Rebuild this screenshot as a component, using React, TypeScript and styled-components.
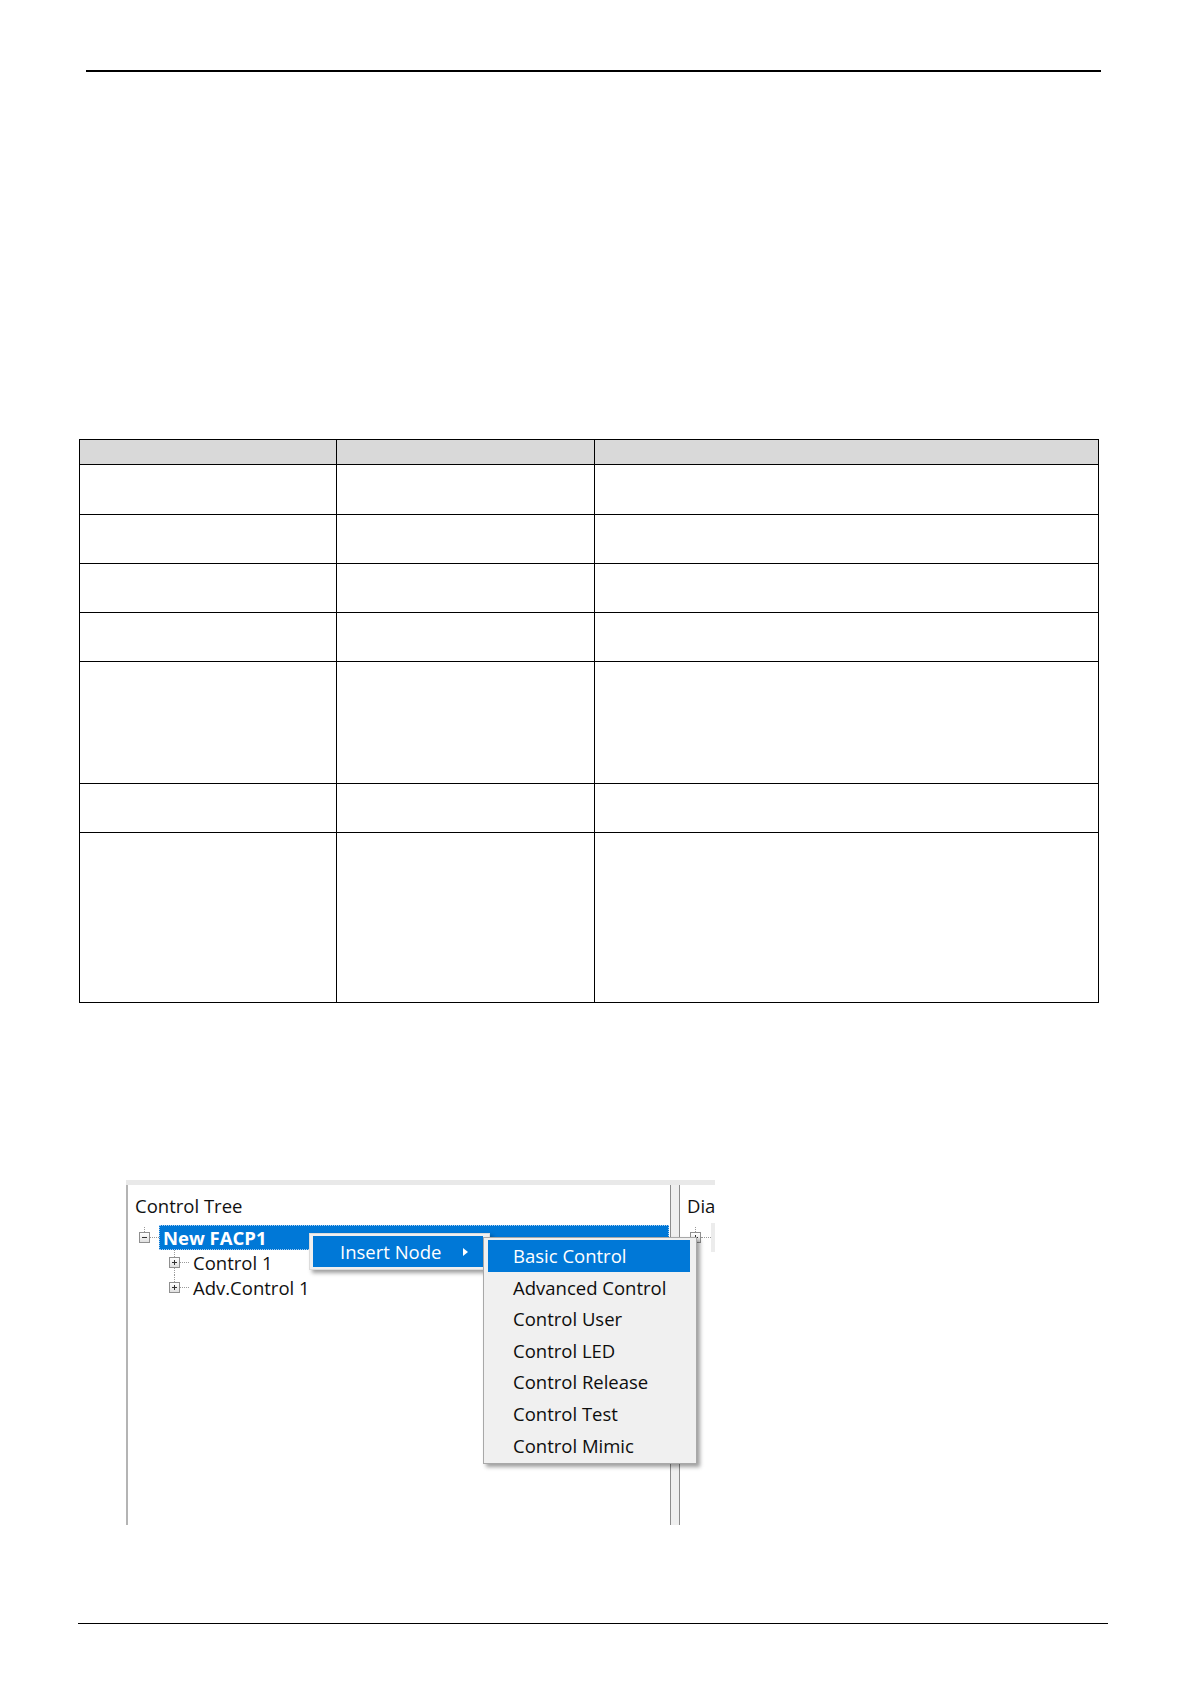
import * as React from 'react';
import styled, { createGlobalStyle } from 'styled-components';

const GlobalStyle = createGlobalStyle`
  html, body {
    margin: 0;
    padding: 0;
    background: #fff;
  }
  body {
    font-family: "Open Sans", "Liberation Sans", sans-serif;
    color: #000;
  }
`;

const Page = styled.div`
  width: 1190px;
  min-height: 1684px;
  display: flex;
  flex-direction: column;
  align-items: flex-start;
`;

const TopRule = styled.div`
  margin: 70px 0 0 86px;
  width: 1015px;
  height: 2px;
  background: #000;
`;

const BottomRule = styled.div`
  margin: 98px 0 0 78px;
  width: 1030px;
  height: 1px;
  background: #000;
`;

// empty spec table
const Table = styled.div`
  margin: 367px 0 0 79px;
  display: grid;
  grid-template-columns: 257px 258px 504px;
  border-top: 1px solid #000;
  border-left: 1px solid #000;
`;

const Cell = styled.div<{ $head?: boolean; $h: number }>`
  box-sizing: border-box;
  height: ${(p) => p.$h}px;
  border-right: 1px solid #000;
  border-bottom: 1px solid #000;
  background: ${(p) => (p.$head ? '#d9d9d9' : '#fff')};
`;

const rowHeights = [25, 50, 49, 49, 49, 122, 49, 170];

// screenshot of the config tool
const Shot = styled.div`
  position: relative;
  margin: 177px 0 0 126px;
  width: 589px;
  height: 345px;
  display: flex;
  flex-direction: column;
  font-size: 18.5px;
  color: #111;
`;

const TopBand = styled.div`
  height: 5px;
  background: #e9e9e9;
`;

const ShotBody = styled.div`
  flex: 1;
  display: flex;
  min-height: 0;
`;

const LeftPanel = styled.div`
  width: 544px;
  box-sizing: border-box;
  border-left: 2px solid #b4b4b4;
  background: #fff;
  padding-top: 9px;
`;

const Splitter = styled.div`
  width: 10px;
  box-sizing: border-box;
  border-left: 1px solid #8c8c8c;
  border-right: 1px solid #8c8c8c;
  background: #efefef;
`;

const RightPanel = styled.div`
  flex: 1;
  overflow: hidden;
  background: #fff;
  padding-top: 9px;
  white-space: nowrap;
`;

const PanelTitle = styled.div<{ $pad: number }>`
  line-height: 24px;
  height: 24px;
  padding-left: ${(p) => p.$pad}px;
`;

const Tree = styled.div`
  margin-top: 7px;
`;

const TreeRow = styled.div<{ $indent: number; $guide?: 'root' | 'mid' | 'last' }>`
  position: relative;
  display: flex;
  align-items: center;
  height: 25px;
  padding-left: ${(p) => p.$indent}px;

  &::before {
    content: '';
    display: ${(p) => (p.$guide ? 'block' : 'none')};
    position: absolute;
    left: ${(p) => p.$indent + 5}px;
    top: ${(p) => (p.$guide === 'root' ? 2 : 0)}px;
    height: ${(p) => (p.$guide === 'mid' ? 25 : p.$guide === 'root' ? 5 : 7)}px;
    border-left: 1px dotted #9a9a9a;
  }
`;

const Expander = styled.span<{ $open?: boolean }>`
  position: relative;
  z-index: 1;
  flex: none;
  width: 11px;
  height: 11px;
  box-sizing: border-box;
  border: 1px solid #8f8f8f;
  background: linear-gradient(#ffffff, #e0e0e0);

  &::before {
    content: '';
    position: absolute;
    left: 2px;
    right: 2px;
    top: 4px;
    height: 1px;
    background: #333;
  }
  &::after {
    content: '';
    display: ${(p) => (p.$open ? 'none' : 'block')};
    position: absolute;
    left: 4px;
    top: 2px;
    bottom: 2px;
    width: 1px;
    background: #333;
  }
`;

const Connector = styled.span<{ $w?: number }>`
  flex: none;
  width: ${(p) => p.$w ?? 9}px;
  border-top: 1px dotted #9a9a9a;
`;

const NodeLabel = styled.span<{ $selected?: boolean; $ghost?: boolean }>`
  height: 25px;
  line-height: 25px;
  padding: 0 4px;
  box-sizing: border-box;
  white-space: nowrap;
  ${(p) =>
    p.$selected &&
    `
    flex: 1;
    margin-right: 1px;
    background: #0078d7;
    color: #fff;
    font-weight: 700;
    outline: 1px dotted #a9cdf0;
    outline-offset: -1px;
  `}
  ${(p) =>
    p.$ghost &&
    `
    flex: 1;
    height: 29px;
    background: #ececec;
  `}
`;

// popup menus lie over the tree
const Menu = styled.div<{ $left: number; $top: number; $w: number }>`
  position: absolute;
  left: ${(p) => p.$left}px;
  top: ${(p) => p.$top}px;
  width: ${(p) => p.$w}px;
  box-sizing: border-box;
  background: #f0f0f0;
  border: 1px solid #c8c8c8;
  box-shadow: 3px 3px 4px rgba(0, 0, 0, 0.38);
`;

const ParentMenu = styled(Menu)`
  padding: 2px 6px 2px 3px;
  border-color: #dcdcdc;
`;

const SubMenu = styled(Menu)`
  padding: 2px 6px 2px 4px;
  border-color: #a8a8a8;
  z-index: 2;
`;

const MenuItem = styled.div<{ $active?: boolean; $h: number; $pad: number }>`
  display: flex;
  align-items: center;
  height: ${(p) => p.$h}px;
  line-height: ${(p) => p.$h}px;
  padding-left: ${(p) => p.$pad}px;
  white-space: nowrap;
  color: ${(p) => (p.$active ? '#fff' : '#0d0d0d')};
  background: ${(p) => (p.$active ? '#0078d7' : 'transparent')};
`;

const SubArrow = styled.span`
  margin-left: auto;
  margin-right: 15px;
  width: 0;
  height: 0;
  border-top: 4px solid transparent;
  border-bottom: 4px solid transparent;
  border-left: 5px solid #fff;
`;

const nodeItems = [
  'Basic Control',
  'Advanced Control',
  'Control User',
  'Control LED',
  'Control Release',
  'Control Test',
  'Control Mimic',
];

const ControlTreeShot: React.FC = () => (
  <Shot>
    <TopBand />
    <ShotBody>
      <LeftPanel>
        <PanelTitle $pad={7}>Control Tree</PanelTitle>
        <Tree>
          <TreeRow $indent={11} $guide="root">
            <Expander $open />
            <Connector />
            <NodeLabel $selected>New FACP1</NodeLabel>
          </TreeRow>
          <TreeRow $indent={41} $guide="mid">
            <Expander />
            <Connector />
            <NodeLabel>Control 1</NodeLabel>
          </TreeRow>
          <TreeRow $indent={41} $guide="last">
            <Expander />
            <Connector />
            <NodeLabel>Adv.Control 1</NodeLabel>
          </TreeRow>
        </Tree>
      </LeftPanel>
      <Splitter />
      <RightPanel>
        <PanelTitle $pad={7}>Dia</PanelTitle>
        <Tree>
          <TreeRow $indent={10} $guide="root">
            <Expander />
            <Connector $w={10} />
            <NodeLabel $ghost />
          </TreeRow>
        </Tree>
      </RightPanel>
    </ShotBody>

    <ParentMenu $left={183} $top={53} $w={181}>
      <MenuItem $active $h={31} $pad={27}>
        Insert Node
        <SubArrow />
      </MenuItem>
    </ParentMenu>

    <SubMenu $left={357} $top={57} $w={214}>
      {nodeItems.map((label, i) => (
        <MenuItem key={label} $active={i === 0} $h={31.6} $pad={25}>
          {label}
        </MenuItem>
      ))}
    </SubMenu>
  </Shot>
);

const App: React.FC = () => {
  return (
    <>
      <GlobalStyle />
      <Page>
        <TopRule />
        <Table>
          {rowHeights.map((h, r) =>
            [0, 1, 2].map((c) => <Cell key={`${r}-${c}`} $h={h} $head={r === 0} />)
          )}
        </Table>
        <ControlTreeShot />
        <BottomRule />
      </Page>
    </>
  );
};

export default App;
